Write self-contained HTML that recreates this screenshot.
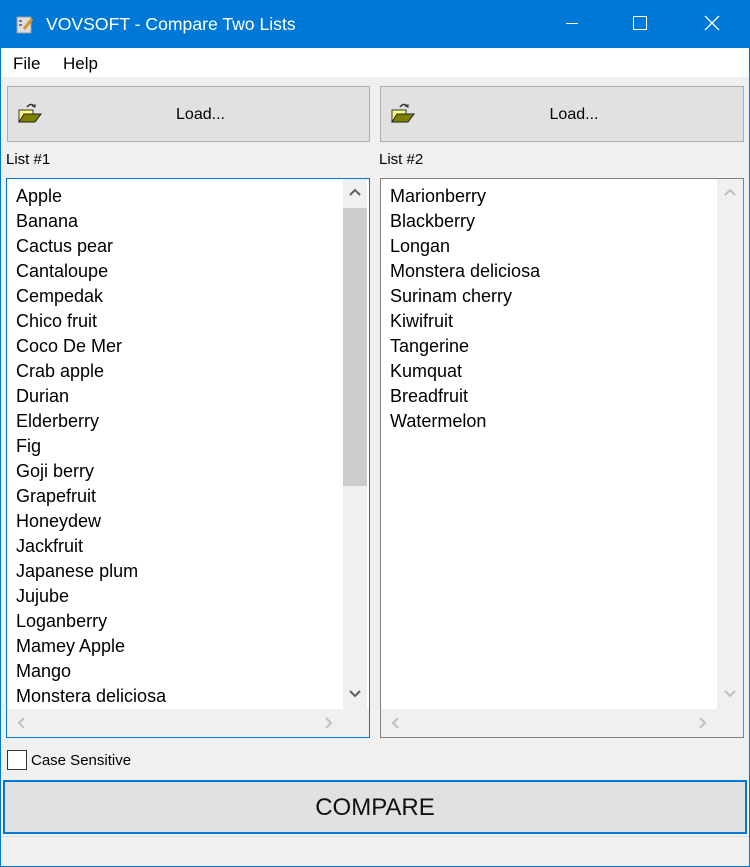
<!DOCTYPE html>
<html><head><style>
*{margin:0;padding:0;box-sizing:border-box}
body{width:750px;height:867px;background:#0078d7;font-family:"Liberation Sans",sans-serif;position:relative;overflow:hidden}
.a{position:absolute}
#win{left:1px;top:48px;width:748px;height:818px;background:#f0f0f0}
.title{left:0;top:0;width:750px;height:48px;color:#fff;font-size:17.6px}
.menu{left:1px;top:48px;width:748px;height:29px;background:#fff;font-size:17px}
.btn{background:#e1e1e1;border:1px solid #adadad;font-size:16px;color:#000}
.list{background:#fff;font-size:18px;color:#000}
.list div.it{height:25px;line-height:25px}
.sb{background:#f0f0f0}
</style></head><body>
<div class="a title">
<svg class="a" style="left:15px;top:15px" width="20" height="20"><rect x="2" y="2" width="14" height="16" fill="#ddd" stroke="#999"/><rect x="4" y="5" width="3" height="2" fill="#777"/><rect x="4" y="9" width="3" height="2" fill="#777"/><path d="M9 14 L17 4" stroke="#e09020" stroke-width="3"/></svg>
<div class="a" style="left:46px;top:14px">VOVSOFT - Compare Two Lists</div>
<div class="a" style="left:566px;top:23px;width:12px;height:1px;background:#fff"></div>
<div class="a" style="left:633px;top:16px;width:14px;height:14px;border:1px solid #fff"></div>
<svg class="a" style="left:704px;top:15px" width="16" height="16"><path d="M1 1L15 15M15 1L1 15" stroke="#fff" stroke-width="1.3"/></svg>
</div>
<div class="a" id="win"></div>
<div class="a menu"><span class="a" style="left:12px;top:6px">File</span><span class="a" style="left:62px;top:6px">Help</span></div>

<div class="a btn" style="left:7px;top:86px;width:363px;height:56px">
<svg class="a" style="left:9px;top:14px" width="26" height="24"><path d="M10 6 q4 -5 8 0" stroke="#333" fill="none" stroke-width="1.5"/><path d="M15 5l3 1 0-3" stroke="#333" fill="none"/><rect x="2" y="9" width="14" height="12" fill="#ffff80" stroke="#333"/><path d="M2 21 L7 13 L24 13 L18 21 Z" fill="#808000" stroke="#222"/></svg>
<div class="a" style="left:0;width:100%;top:19px;text-align:center;padding-left:24px">Load...</div></div>
<div class="a btn" style="left:380px;top:86px;width:364px;height:56px">
<svg class="a" style="left:9px;top:14px" width="26" height="24"><path d="M10 6 q4 -5 8 0" stroke="#333" fill="none" stroke-width="1.5"/><path d="M15 5l3 1 0-3" stroke="#333" fill="none"/><rect x="2" y="9" width="14" height="12" fill="#ffff80" stroke="#333"/><path d="M2 21 L7 13 L24 13 L18 21 Z" fill="#808000" stroke="#222"/></svg>
<div class="a" style="left:0;width:100%;top:19px;text-align:center;padding-left:24px">Load...</div></div>

<div class="a" style="left:6px;top:151px;font-size:15px">List #1</div>
<div class="a" style="left:379px;top:151px;font-size:15px">List #2</div>

<div class="a list" style="left:6px;top:178px;width:364px;height:560px;border:1px solid #0078d7">
<div class="a" style="left:9px;top:5px">
<div class="it">Apple</div><div class="it">Banana</div><div class="it">Cactus pear</div><div class="it">Cantaloupe</div><div class="it">Cempedak</div><div class="it">Chico fruit</div><div class="it">Coco De Mer</div><div class="it">Crab apple</div><div class="it">Durian</div><div class="it">Elderberry</div><div class="it">Fig</div><div class="it">Goji berry</div><div class="it">Grapefruit</div><div class="it">Honeydew</div><div class="it">Jackfruit</div><div class="it">Japanese plum</div><div class="it">Jujube</div><div class="it">Loganberry</div><div class="it">Mamey Apple</div><div class="it">Mango</div><div class="it">Monstera deliciosa</div>
</div>
<div class="a sb" style="left:336px;top:0;width:24px;height:530px"><div class="a" style="left:0;top:29px;width:24px;height:278px;background:#cdcdcd"></div>
<svg class="a" style="left:6px;top:9px" width="12" height="8"><path d="M1 7L6 2L11 7" stroke="#606060" stroke-width="2" fill="none"/></svg>
<svg class="a" style="left:6px;top:511px" width="12" height="8"><path d="M1 1L6 6L11 1" stroke="#606060" stroke-width="2" fill="none"/></svg></div>
<div class="a sb" style="left:0;top:530px;width:362px;height:28px">
<svg class="a" style="left:10px;top:8px" width="8" height="12"><path d="M7 1L2 6L7 11" stroke="#c0c0c0" stroke-width="2" fill="none"/></svg>
<svg class="a" style="left:318px;top:8px" width="8" height="12"><path d="M1 1L6 6L1 11" stroke="#c0c0c0" stroke-width="2" fill="none"/></svg></div>
</div>

<div class="a list" style="left:380px;top:178px;width:364px;height:560px;border:1px solid #828282">
<div class="a" style="left:9px;top:5px">
<div class="it">Marionberry</div><div class="it">Blackberry</div><div class="it">Longan</div><div class="it">Monstera deliciosa</div><div class="it">Surinam cherry</div><div class="it">Kiwifruit</div><div class="it">Tangerine</div><div class="it">Kumquat</div><div class="it">Breadfruit</div><div class="it">Watermelon</div>
</div>
<div class="a sb" style="left:336px;top:0;width:26px;height:530px">
<svg class="a" style="left:7px;top:9px" width="12" height="8"><path d="M1 7L6 2L11 7" stroke="#c0c0c0" stroke-width="2" fill="none"/></svg>
<svg class="a" style="left:7px;top:511px" width="12" height="8"><path d="M1 1L6 6L11 1" stroke="#c0c0c0" stroke-width="2" fill="none"/></svg></div>
<div class="a sb" style="left:0;top:530px;width:362px;height:28px">
<svg class="a" style="left:10px;top:8px" width="8" height="12"><path d="M7 1L2 6L7 11" stroke="#c0c0c0" stroke-width="2" fill="none"/></svg>
<svg class="a" style="left:318px;top:8px" width="8" height="12"><path d="M1 1L6 6L1 11" stroke="#c0c0c0" stroke-width="2" fill="none"/></svg></div>
</div>

<div class="a" style="left:7px;top:750px;width:20px;height:20px;border:1px solid #333;background:#fff"></div>
<div class="a" style="left:31px;top:752px;font-size:15px">Case Sensitive</div>

<div class="a" style="left:3px;top:780px;width:744px;height:54px;background:#e1e1e1;border:2px solid #0078d7;font-size:24px;text-align:center;line-height:52px;color:#111">COMPARE</div>
<div class="a" style="left:1px;top:836px;width:748px;height:1px;background:#dcdcdc"></div>
</body></html>
